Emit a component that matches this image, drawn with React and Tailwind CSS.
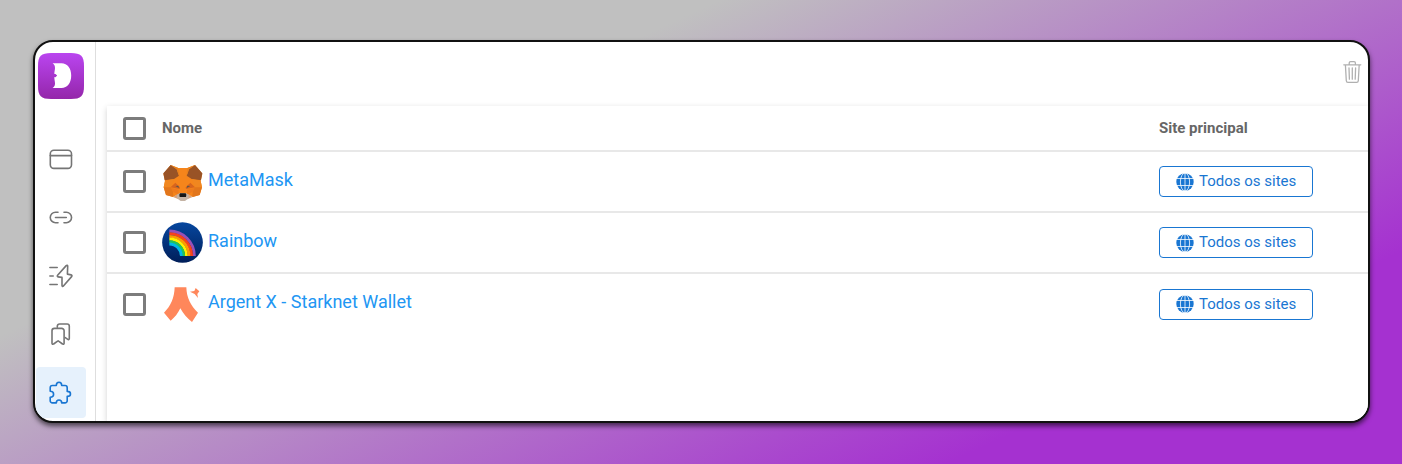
import React, { useState } from 'react';

const Logo = () => (
  <svg viewBox="0 0 46 46" className="size-[46px]" aria-hidden="true">
    <defs>
      <linearGradient id="logo-bg" x1="0" y1="0" x2="0" y2="1">
        <stop offset="0" stopColor="#ba45f0" />
        <stop offset="1" stopColor="#9426aa" />
      </linearGradient>
    </defs>
    <path
      d="M0 13C0 3 3 0 13 0h20c10 0 13 3 13 13v20c0 10-3 13-13 13H13C3 46 0 43 0 33Z"
      fill="url(#logo-bg)"
    />
    <path
      d="M14.600 10.200H23.500C29.500 10.200 33.200 15.200 33.200 22.600S29.500 35 23.500 35H14.600C16.400 33.900 17 32.300 17 30.300C17 28.300 16.200 26.500 16.400 24.100L17.500 24.300L19.200 22.600L17.500 20.900L16.400 21.100C16.200 18.700 17 16.900 17 14.900C17 12.900 16.400 11.300 14.600 10.200Z"
      fill="#fff"
    />
  </svg>
);

const LineIcon = ({ children }) => (
  <svg
    viewBox="0 0 24 24"
    className="size-6"
    fill="none"
    stroke="currentColor"
    strokeWidth="1.6"
    strokeLinecap="round"
    strokeLinejoin="round"
    aria-hidden="true"
  >
    {children}
  </svg>
);

const WindowIcon = () => (
  <LineIcon>
    <rect x="1.300" y="2.200" width="21.200" height="18.200" rx="3.600" />
    <path d="M1.300 7.600h21.200" />
  </LineIcon>
);

const LinkIcon = () => (
  <LineIcon>
    <path d="M9 6.200H6.500a5.250 5.250 0 0 0 0 10.500H9M15 6.200h2.300a5.250 5.250 0 0 1 0 10.500H15M6.500 11.450h10.800" />
  </LineIcon>
);

const BoltIcon = () => (
  <LineIcon>
    <path d="M.9 3.500h7.300M.9 12h3.300M.9 20.500h7.300" />
    <path d="M17.200 1.600L8.600 11.300c-.6.700-.3 1.500.5 1.600l3.900.5v8.100c0 1 .8 1.200 1.400.5l8.200-9.400c.6-.7.400-1.500-.5-1.700l-3.700-.8l.3-7.900c0-1-.8-1.300-1.500-.6Z" />
  </LineIcon>
);

const BookmarksIcon = () => (
  <LineIcon>
    <path d="M8.300 5.200V4.200a2.200 2.200 0 0 1 2.200-2.200h7.600a2.200 2.200 0 0 1 2.200 2.200v12.400c0 .9-.8 1.300-1.500.7l-2.500-1.700" />
    <path d="M3 8.800a2.400 2.400 0 0 1 2.400-2.400h7.300a2.400 2.400 0 0 1 2.400 2.400v12.400c0 1-.9 1.400-1.600.8L9.600 19.100a.8.800 0 0 0-1 0l-4 2.900c-.7.600-1.600.2-1.600-.8Z" />
  </LineIcon>
);

const PuzzleIcon = () => (
  <LineIcon>
    <path d="M7.300 4.500c0-1.900 1.100-3.300 2.700-3.300s2.700 1.400 2.700 3.300H16a2.200 2.200 0 0 1 2.200 2.200v3.700c1.900 0 3.300 1 3.300 2.500s-1.400 2.500-3.300 2.500v4.300a2.200 2.200 0 0 1-2.200 2.200h-3.300c0-1.800-1.100-2.900-2.700-2.900s-2.700 1.100-2.700 2.900H3.400a2.200 2.200 0 0 1-2.200-2.200v-3.500c2 0 3.400-1.200 3.400-3s-1.400-2.900-3.400-2.900V6.700A2.200 2.200 0 0 1 3.400 4.500Z" />
  </LineIcon>
);

const TrashIcon = () => (
  <svg
    viewBox="0 0 20 24"
    className="h-6 w-5"
    fill="none"
    stroke="currentColor"
    strokeWidth="1.300"
    strokeLinecap="round"
    strokeLinejoin="round"
    aria-hidden="true"
  >
    <path d="M1.800 4.800h17M3.400 4.800l.9 15.900c.1 1 .6 1.600 1.600 1.600h8.800c1 0 1.500-.6 1.600-1.600l.9-15.900M7.200 4.800V3c0-.9.500-1.400 1.400-1.400H12c.9 0 1.400.5 1.400 1.400v1.800M7 8l.4 11.200M10.300 8v11.200M13.600 8l-.4 11.200" />
  </svg>
);

const GlobeIcon = () => (
  <svg viewBox="0 0 18 18" className="size-[18px]" aria-hidden="true">
    <circle cx="9" cy="9" r="8.700" fill="currentColor" />
    <g fill="none" stroke="#fff" strokeWidth=".8">
      <path d="M0 5.500h18M0 12.500h18M9 0v18" />
      <ellipse cx="9" cy="9" rx="4.600" ry="9" />
    </g>
  </svg>
);

const MetaMaskIcon = () => (
  <svg viewBox="0 0 123 123" className="size-[41px]" aria-hidden="true">
    <path d="M26 12L49 21H76L99 12L121 38L116 60L120 79L113 102L92 108L78 101H47L33 108L12 102L5 79L9 60L4 38Z" fill="#f6851b" />
    <path d="M26 12L4 37L8 58L36 54L51 44L44 25ZM99 12L121 37L117 58L89 54L74 44L81 25Z" fill="#995326" />
    <path d="M26 12L49 21L53 50L44 25ZM99 12L76 21L72 50L81 25Z" fill="#e8821e" />
    <path d="M9 59L36 54L26 79H5ZM116 59L89 54L99 79H120Z" fill="#f08720" />
    <path d="M5 79H27L33 92L34 108L12 102ZM120 79H98L92 92L91 108L113 102Z" fill="#e2761b" />
    <path d="M26 79L40 65L54 79L53 84ZM99 79L85 65L71 79L72 84Z" fill="#d7651e" />
    <path d="M27 80L50 86L49 101L33 92ZM98 80L75 86L76 101L92 92Z" fill="#ed7a1d" />
    <path d="M40 75L49 74L51 81ZM85 75L76 74L74 81Z" fill="#5a5450" />
    <path d="M33 108L48 98L47 110L50 115ZM92 108L77 98L78 110L75 115Z" fill="#d9a37a" />
    <path d="M46 101L53 96H72L79 101L80 112L69 120H56L45 112Z" fill="#c4b3a4" />
    <path d="M54 97H71L73 101L72 108H53L52 101Z" fill="#161616" />
  </svg>
);

const RAINBOW_BANDS = [
  { r: 75, color: '#9650b8' },
  { r: 67, color: '#f8411d' },
  { r: 59, color: '#ff9901' },
  { r: 51, color: '#fff000' },
  { r: 43, color: '#22c55a' },
  { r: 36, color: '#01b8e8' },
];

const RainbowIcon = () => (
  <svg viewBox="0 0 123 123" className="size-[41px]" aria-hidden="true">
    <defs>
      <linearGradient id="rainbow-bg" x1="0" y1="0" x2="0" y2="1">
        <stop offset="0" stopColor="#06479f" />
        <stop offset="1" stopColor="#001e59" />
      </linearGradient>
    </defs>
    <circle cx="61.500" cy="61.500" r="61" fill="url(#rainbow-bg)" />
    {RAINBOW_BANDS.map(({ r, color }) => (
      <path
        key={r}
        d={`M22 ${102 - r}A${r} ${r} 0 0 1 ${22 + r} 102`}
        fill="none"
        stroke={color}
        strokeWidth="8.500"
      />
    ))}
  </svg>
);

const ArgentIcon = () => (
  <svg viewBox="0 0 123 123" className="size-[41px]" fill="#ff875b" aria-hidden="true">
    <path d="M38 10H73C74 41 86 66 108 86L90 114C76 103 63 89 55 73C48 88 38 101 26 110L6 86C26 67 37 41 38 10Z" />
    <path d="M84 23L97 21L101 12L112 22L106 30L108 42L98 30Z" />
  </svg>
);

const navItems = [
  { label: 'Janelas', icon: WindowIcon },
  { label: 'Links', icon: LinkIcon },
  { label: 'Atalhos', icon: BoltIcon },
  { label: 'Favoritos', icon: BookmarksIcon },
  { label: 'Extensões', icon: PuzzleIcon, active: true },
];

const extensions = [
  { name: 'MetaMask', icon: MetaMaskIcon },
  { name: 'Rainbow', icon: RainbowIcon },
  { name: 'Argent X - Starknet Wallet', icon: ArgentIcon },
];

const Checkbox = ({ label, checked, onChange }) => (
  <input
    type="checkbox"
    aria-label={label}
    checked={checked}
    onChange={onChange}
    className="block size-[23px] appearance-none rounded-[3px] border-3 border-[#7c7c7c] bg-white checked:bg-[#1976d2]"
  />
);

const App = () => {
  const [selected, setSelected] = useState([]);

  const toggle = (name) => {
    setSelected(selected.includes(name) ? selected.filter((n) => n !== name) : [...selected, name]);
  };

  const allSelected = selected.length === extensions.length;

  return (
    <div className="flex min-h-screen bg-[linear-gradient(155deg,#c0c0c0_30%,#a531d0_81%)] pt-10 pr-8 pb-[41px] pl-[33px] font-['Roboto',sans-serif]">
      <div className="flex min-w-0 flex-1 overflow-hidden rounded-[20px] border-2 border-[#111] bg-white shadow-[0_3px_5px_rgba(0,0,0,0.6)]">
        {/* Sidebar */}
        <aside className="w-[61px] shrink-0 border-r border-[#dedede] pt-[11px] pl-px">
          <a href="#" aria-label="Início" className="ml-0.5 block">
            <Logo />
          </a>
          <nav className="mt-9 flex flex-col gap-2">
            {navItems.map(({ label, icon: Icon, active }) => (
              <a
                key={label}
                href="#"
                aria-label={label}
                className={
                  active
                    ? 'flex h-[51px] w-[50px] items-center justify-center rounded bg-[#e6f1fc] text-[#1976d2]'
                    : 'flex size-[50px] items-center justify-center rounded text-[#757575]'
                }
              >
                <Icon />
              </a>
            ))}
          </nav>
        </aside>

        <main className="flex min-w-0 flex-1 flex-col pl-[11px]">
          <header className="mb-1 flex h-[60px] shrink-0 items-center justify-end pr-1.5">
            <button type="button" aria-label="Remover" className="text-[#b0b0b0]">
              <TrashIcon />
            </button>
          </header>

          {/* Extensions table */}
          <section className="flex-1 bg-white shadow-[0_2px_6px_rgba(0,0,0,0.18)]">
            <table className="w-full table-fixed border-collapse text-left">
              <thead>
                <tr className="h-[45px] border-b-2 border-[#e8e8e8] text-[15px] text-[#666]">
                  <th className="w-[55px] pl-4">
                    <Checkbox
                      label="Selecionar tudo"
                      checked={allSelected}
                      onChange={() => setSelected(allSelected ? [] : extensions.map((e) => e.name))}
                    />
                  </th>
                  <th className="font-bold">Nome</th>
                  <th className="w-[209px] font-bold">Site principal</th>
                </tr>
              </thead>
              <tbody>
                {extensions.map(({ name, icon: Icon }) => (
                  <tr key={name} className="h-[61px] border-b-2 border-[#e8e8e8] last:border-0">
                    <td className="pl-4">
                      <Checkbox
                        label={name}
                        checked={selected.includes(name)}
                        onChange={() => toggle(name)}
                      />
                    </td>
                    <td>
                      <a href="#" className="flex items-center gap-[5px] text-lg text-[#2196f3]">
                        <Icon />
                        <span className="pb-1">{name}</span>
                      </a>
                    </td>
                    <td>
                      <button
                        type="button"
                        className="flex h-[31px] items-center gap-[5px] rounded border border-[#1976d2] px-4 text-[15px] text-[#1976d2]"
                      >
                        <GlobeIcon />
                        Todos os sites
                      </button>
                    </td>
                  </tr>
                ))}
              </tbody>
            </table>
          </section>
        </main>
      </div>
    </div>
  );
};

export default App;
